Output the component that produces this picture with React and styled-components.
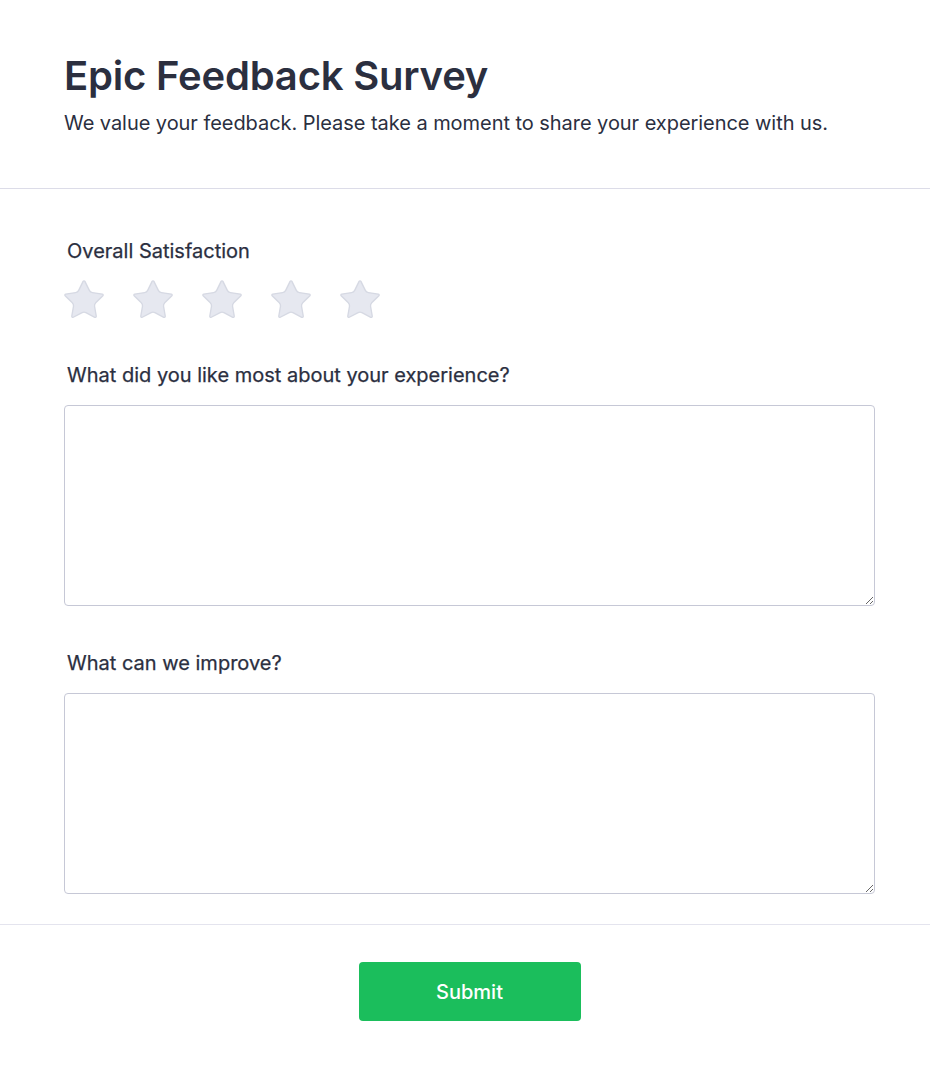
import styled, { createGlobalStyle } from "styled-components";

const GlobalStyle = createGlobalStyle`
    body {
        margin: 0;
        background: #ffffff;
        font-family: Inter, "Noto Sans", sans-serif;
        color: #2b2f3f;
    }
`

const Star = () => (
    <svg width="46" height="46" viewBox="0 0 24 24">
        <path
            d="M11.52 2.3a.53.53 0 0 1 .96 0l2.31 4.68a2.12 2.12 0 0 0 1.6 1.16l5.16.76a.53.53 0 0 1 .3.9l-3.73 3.64a2.12 2.12 0 0 0-.61 1.88l.88 5.14a.53.53 0 0 1-.77.56l-4.62-2.43a2.12 2.12 0 0 0-1.97 0L6.4 21.01a.53.53 0 0 1-.77-.56l.88-5.14a2.12 2.12 0 0 0-.61-1.88L2.17 9.8a.53.53 0 0 1 .3-.9l5.16-.76a2.12 2.12 0 0 0 1.6-1.16z"
            fill="#e6e8f0"
            stroke="#d6d9e3"
            strokeWidth="0.7"
            strokeLinejoin="round"
        />
    </svg>
)

const App = () => {
    const stars = [1, 2, 3, 4, 5];

    return (
        <Page>
            <GlobalStyle />
            <Header>
                <h1>Epic Feedback Survey</h1>
                <p>We value your feedback. Please take a moment to share your experience with us.</p>
            </Header>
            <Body>
                <Field $gap={15}>
                    <Label>Overall Satisfaction</Label>
                    <Stars>
                        {stars.map((s) => (
                            <StarButton key={s} aria-label={`${s} star`}>
                                <Star />
                            </StarButton>
                        ))}
                    </Stars>
                </Field>
                <Field>
                    <Label>What did you like most about your experience?</Label>
                    <TextArea />
                </Field>
                <Field $top={-1}>
                    <Label>What can we improve?</Label>
                    <TextArea />
                </Field>
            </Body>
            <Footer>
                <SubmitButton>Submit</SubmitButton>
            </Footer>
        </Page>
    )
}

const Page = styled.div`
    width: 930px;
    min-height: 1071px;
    background: #ffffff;
`

const Header = styled.header`
    padding: 52px 55px 50px 64px;
    border-bottom: 1px solid #dcdce8;

    h1 {
        margin: 0;
        font-size: 40px;
        line-height: 48px;
        font-weight: 600;
        color: #2b2f3f;
        letter-spacing: -0.2px;
    }
    p {
        margin: 8px 0 0;
        font-size: 20px;
        line-height: 30px;
        letter-spacing: -0.05px;
        color: #2b2f3f;
    }
`

const Body = styled.main`
    display: flex;
    flex-direction: column;
    gap: 44px;
    padding: 48px 55px 30px 64px;
`

const Field = styled.div`
    display: flex;
    flex-direction: column;
    gap: ${(p) => p.$gap ?? 16}px;
    margin-top: ${(p) => p.$top ?? 0}px;
`

const Label = styled.label`
    padding-left: 3px;
    font-size: 20px;
    line-height: 28px;
    font-weight: 400;
    color: #2b2f3f;
    -webkit-text-stroke: 0.25px #2b2f3f;
`

const Stars = styled.div`
    display: flex;
    align-items: center;
    gap: 23px;
    height: 40px;
    margin: 0 0 -3px -3px;
`

const StarButton = styled.button`
    padding: 0;
    border: 0;
    background: none;
    width: 46px;
    height: 46px;
    cursor: pointer;
    display: flex;
    flex-shrink: 0;
`

const TextArea = styled.textarea`
    box-sizing: border-box;
    width: 100%;
    height: 201px;
    border: 1px solid #c6c8d6;
    border-radius: 4px;
    padding: 10px 12px;
    font-family: Inter, sans-serif;
    font-size: 16px;
    resize: vertical;
    display: block;
`

const Footer = styled.footer`
    display: flex;
    justify-content: center;
    border-top: 1px solid #e4e4ee;
    padding: 37px 55px 48px 64px;
`

const SubmitButton = styled.button`
    width: 222px;
    height: 59px;
    border: 0;
    border-radius: 4px;
    background: #1bbe5c;
    color: #ffffff;
    font-family: Inter, sans-serif;
    font-size: 20px;
    font-weight: 500;
    cursor: pointer;
`

export default App;
